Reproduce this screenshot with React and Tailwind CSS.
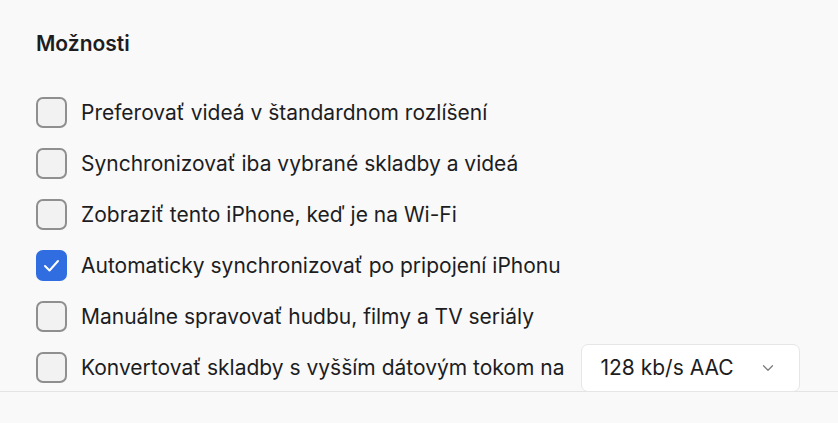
import React, { useState } from "react";
import { ChevronDown } from "lucide-react";

const options = [
  { id: "sd", label: "Preferovať videá v štandardnom rozlíšení", checked: false },
  { id: "selected", label: "Synchronizovať iba vybrané skladby a videá", checked: false },
  { id: "wifi", label: "Zobraziť tento iPhone, keď je na Wi-Fi", checked: false },
  { id: "auto", label: "Automaticky synchronizovať po pripojení iPhonu", checked: true },
  { id: "manual", label: "Manuálne spravovať hudbu, filmy a TV seriály", checked: false },
];

function Checkbox({ checked, onChange }) {
  return (
    <button
      type="button"
      onClick={onChange}
      className={
        checked
          ? "flex h-[31px] w-[31px] shrink-0 items-center justify-center rounded-[7px] bg-[#2f6de1]"
          : "h-[31px] w-[31px] shrink-0 rounded-[7px] border-2 border-[#8f8f8f] bg-[#f2f2f2]"
      }
    >
      {checked && (
        <svg width="17" height="13" viewBox="0 0 17 13" fill="none">
          <path d="M2 7l4.5 4.5L15 2" stroke="white" strokeWidth="2" strokeLinecap="round" strokeLinejoin="round" />
        </svg>
      )}
    </button>
  );
}

export default function App() {
  const [state, setState] = useState(
    Object.fromEntries(options.map((o) => [o.id, o.checked]).concat([["convert", false]]))
  );

  const toggle = (id) => setState((prev) => ({ ...prev, [id]: !prev[id] }));

  return (
    <div className="h-[423px] w-[838px] overflow-hidden bg-[#f9f9f9] text-[#1d1d1f]" style={{ fontFamily: "Inter, 'Noto Sans', sans-serif" }}>
      <div className="px-9 pt-[29px]">
        <h2 className="text-[21px] font-semibold leading-[30px]">Možnosti</h2>

        {/* Options list */}
        <div className="mt-[38px] flex flex-col gap-5">
          {options.map((o) => (
            <label key={o.id} className="flex h-[31px] items-center gap-[14px]">
              <Checkbox checked={state[o.id]} onChange={() => toggle(o.id)} />
              <span className="whitespace-nowrap text-[21px]">{o.label}</span>
            </label>
          ))}
          <div className="flex h-[31px] items-center gap-[14px]">
            <Checkbox checked={state.convert} onChange={() => toggle("convert")} />
            <span className="whitespace-nowrap text-[21px]">Konvertovať skladby s vyšším dátovým tokom na</span>
            <div className="ml-[3px] flex h-[48px] w-[219px] shrink-0 items-center justify-between rounded-[7px] border border-[#e6e6e6] bg-white pl-[18px] pr-[22px]">
              <span className="whitespace-nowrap text-[21px]">128 kb/s AAC</span>
              <ChevronDown size={18} strokeWidth={1.6} className="text-[#7a7a7a]" />
            </div>
          </div>
        </div>
      </div>
      <div className="mt-2 border-t border-[#e4e4e4]" />
    </div>
  );
}
